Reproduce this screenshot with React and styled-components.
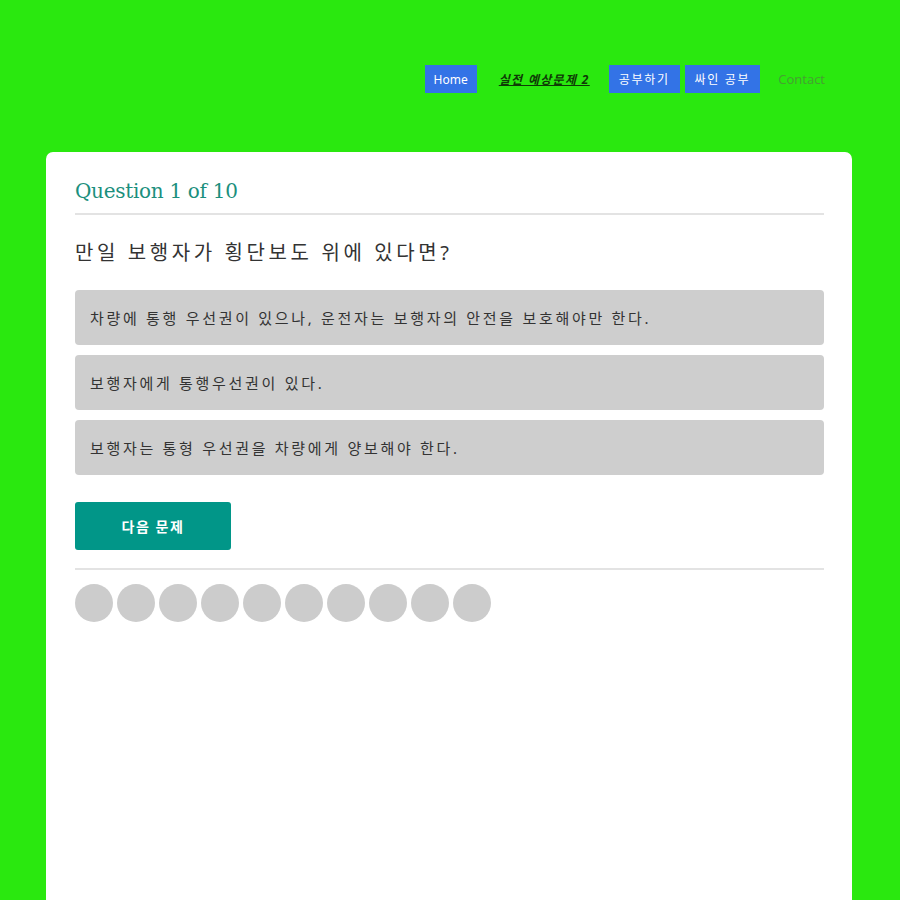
import React from "react";
import styled, { createGlobalStyle } from "styled-components";

const options = [
  "차량에 통행 우선권이 있으나, 운전자는 보행자의 안전을 보호해야만 한다.",
  "보행자에게 통행우선권이 있다.",
  "보행자는 통형 우선권을 차량에게 양보해야 한다.",
];

export default function App() {
  return (
    <>
      <GlobalStyle />
      <Page>
        <Nav>
          <NavButton>Home</NavButton>
          <ActiveLink>실전 예상문제 2</ActiveLink>
          <NavButton $ko>공부하기</NavButton>
          <NavButton $ko>싸인 공부</NavButton>
          <NavText>Contact</NavText>
        </Nav>
        <Card>
          <Heading>Question 1 of 10</Heading>
          <Divider />
          <QuestionText>만일 보행자가 횡단보도 위에 있다면?</QuestionText>
          <Options>
            {options.map((o) => (
              <Option key={o}>{o}</Option>
            ))}
          </Options>
          <NextButton>다음 문제</NextButton>
          <Divider />
          <Dots>
            {Array.from({ length: 10 }).map((_, i) => (
              <Dot key={i} />
            ))}
          </Dots>
        </Card>
      </Page>
    </>
  );
}

const GlobalStyle = createGlobalStyle`
  html, body {
    margin: 0;
    padding: 0;
    background: #2ae80f;
    font-family: "Noto Sans", "Noto Sans CJK KR", sans-serif;
    overflow: hidden;
  }
`;

const Page = styled.div`
  height: 900px;
  padding: 65px 48px 0 46px;
  box-sizing: border-box;
`;

const Nav = styled.nav`
  display: flex;
  justify-content: flex-end;
  align-items: center;
  height: 28px;
  padding-right: 27px;
  gap: 5px;
`;

const NavButton = styled.a`
  display: flex;
  align-items: center;
  height: 28px;
  padding: 0 ${(p) => (p.$ko ? "10px" : "9px")};
  background: #3373e6;
  color: #fff;
  font-family: "Noto Sans", "Noto Sans CJK KR", sans-serif;
  font-size: 12px;
  letter-spacing: ${(p) => (p.$ko ? "0.14em" : "0")};
  box-sizing: border-box;
`;

const ActiveLink = styled.a`
  margin: 0 14px 0 17px;
  font-family: "Noto Sans", "Noto Sans CJK KR", sans-serif;
  font-size: 12px;
  font-weight: bold;
  font-style: italic;
  letter-spacing: 0.11em;
  text-decoration: underline;
  color: #0f3a06;
`;

const NavText = styled.a`
  margin-left: 13px;
  font-family: "Open Sans", sans-serif;
  font-size: 13px;
  color: #46a032;
`;

const Card = styled.div`
  margin-top: 59px;
  background: #fff;
  border-radius: 7px;
  padding: 24px 28px 0 29px;
  height: 800px;
  box-sizing: border-box;
`;

const Heading = styled.h2`
  margin: 0;
  font-family: "DejaVu Serif", serif;
  font-weight: normal;
  font-size: 20px;
  line-height: 30px;
  color: #1b8f7d;
  letter-spacing: -0.3px;
`;

const Divider = styled.div`
  height: 2px;
  background: #e3e3e3;
  margin-top: 7px;
`;

const QuestionText = styled.p`
  margin: 22px 0 0;
  font-size: 20px;
  line-height: 32px;
  letter-spacing: 0.18em;
  color: #333;
`;

const Options = styled.div`
  display: flex;
  flex-direction: column;
  gap: 10px;
  margin-top: 21px;
`;

const Option = styled.div`
  height: 55px;
  display: flex;
  align-items: center;
  padding: 0 15px;
  background: #cecece;
  border-radius: 4px;
  font-size: 15px;
  letter-spacing: 0.18em;
  color: #333;
`;

const NextButton = styled.button`
  display: block;
  margin-top: 27px;
  margin-bottom: 18px;
  width: 156px;
  height: 48px;
  border: none;
  border-radius: 3px;
  background: #019688;
  color: #fff;
  font-family: "Noto Sans CJK KR", sans-serif;
  font-weight: bold;
  font-size: 14px;
  letter-spacing: 0.12em;
`;

const Dots = styled.div`
  display: flex;
  gap: 4px;
  margin-top: 14px;
`;

const Dot = styled.div`
  width: 38px;
  height: 38px;
  border-radius: 50%;
  background: #cccccc;
`;
